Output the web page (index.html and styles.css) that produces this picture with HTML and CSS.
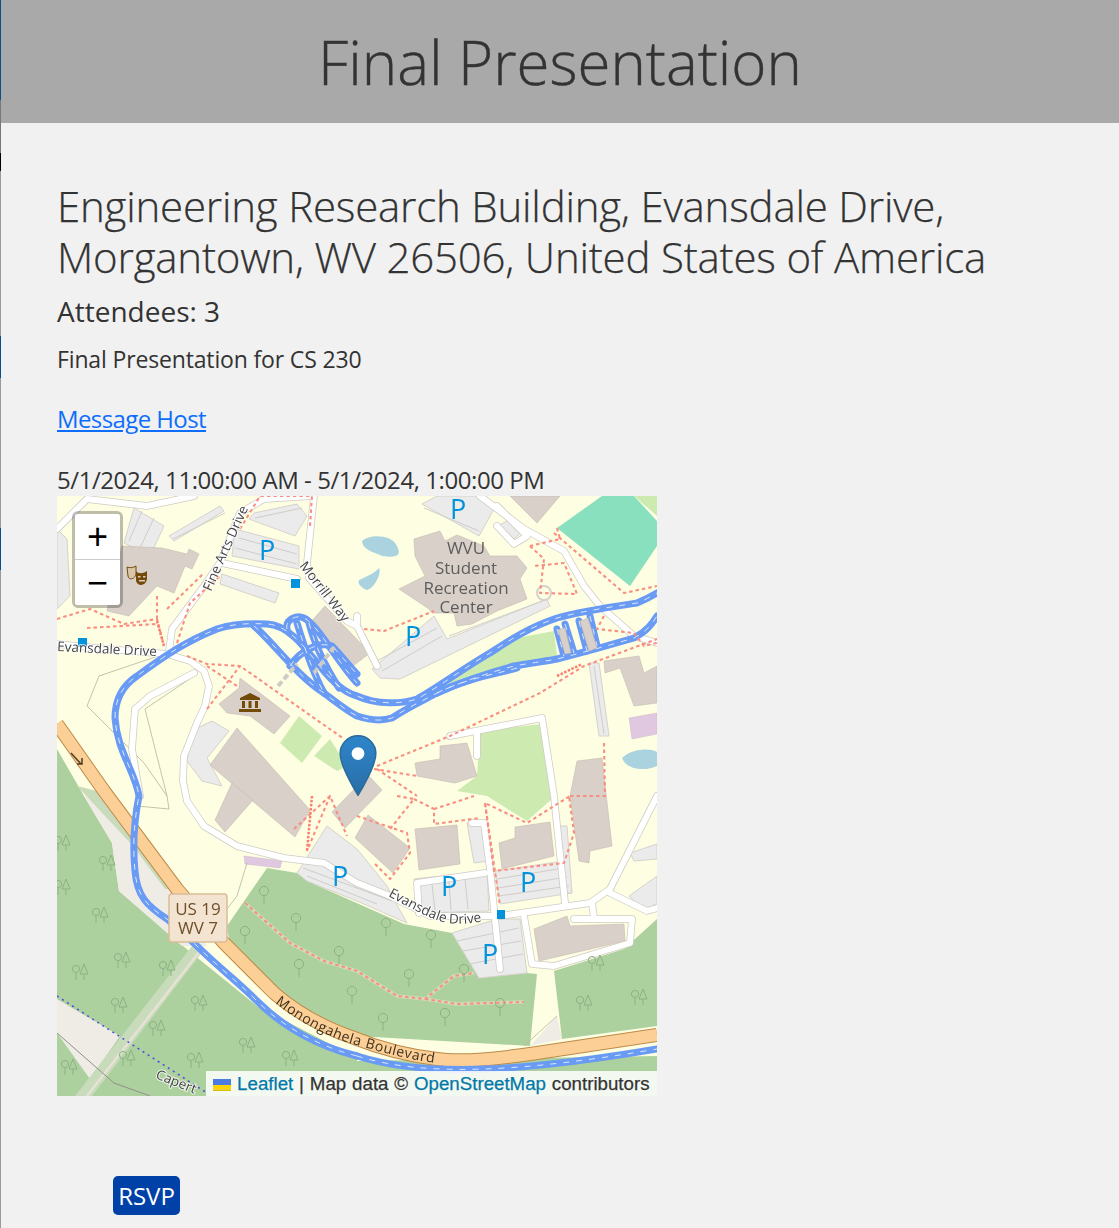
FILE: index.html
```html
<!DOCTYPE html>
<html lang="en">
<head>
  <meta charset="UTF-8">
  <title>Final Presentation</title>
  <meta name="viewport" content="width=device-width, initial-scale=1.0">
  <link rel="stylesheet" href="styles.css">
</head>
<body>

  <header class="top-bar">
    <h1>Final Presentation</h1>
  </header>

  <main class="event">
    <h2>Engineering Research Building, Evansdale Drive, Morgantown, WV 26506, United States of America</h2>
    <h3>Attendees: 3</h3>
    <p class="description">Final Presentation for CS 230</p>
    <p class="host"><a href="#">Message Host</a></p>
    <p class="dates">5/1/2024, 11:00:00 AM - 5/1/2024, 1:00:00 PM</p>

    <div class="map">
      <svg class="tiles" viewBox="0 0 600 600" width="600" height="600">
        <defs>
          <g id="tree"><circle cx="0" cy="-5" r="4.6"/><path d="M0 0v8"/></g>
          <g id="trees"><circle cx="-4" cy="-4" r="3.6"/><path d="M-4 0v7"/><path d="M4 -9l-4 10h8zM4 1v6"/></g>

          <g id="roads">
            <polyline points="0,148 50,153 110,158 133,165 147,175 152,190 148,210 140,227 127,260 126,285 130,305 147,330 180,350 227,362 267,367 300,387 333,400 373,420 443,420 533,407 553,393 600,300"/>
            <polyline points="112,155 115,133 147,90 163,67 183,17 207,3 255,0"/>
            <polyline points="257,0 250,67 252,82 290,125 300,130 320,170"/>
            <polyline points="165,67 240,83"/>
            <polyline points="0,33 30,3 90,10 137,0"/>
            <polyline points="423,0 467,33 507,55 527,90 543,110 577,140 600,147"/>
            <polyline points="393,240 485,222 497,300 508,407"/>
            <polyline points="420,237 420,260"/>
            <polyline points="415,327 427,327 433,373 443,473"/>
            <polyline points="362,417 360,387 428,377"/>
            <polyline points="467,420 475,468 497,470 573,447 575,423 517,423"/>
            <polyline points="535,407 537,422"/>
            <polyline points="553,397 590,415 600,412"/>
            <polyline points="137,177 93,200 78,213 75,253 83,300"/>
            <polyline points="300,127 300,120"/>
            <polyline points="440,30 457,48 470,40 440,10"/>
          </g>

          <g id="paths">
            <polyline points="0,123 33,113 67,128 100,123 107,150"/>
            <polyline points="30,132 100,128"/>
            <polyline points="100,123 100,97"/>
            <polyline points="110,113 147,77"/>
            <polyline points="120,147 133,107 163,80"/>
            <polyline points="130,160 150,168 183,170 240,210 287,243"/>
            <polyline points="150,213 183,170"/>
            <polyline points="150,170 180,190"/>
            <polyline points="183,33 203,0 255,0 253,30"/>
            <polyline points="307,133 327,135 377,115"/>
            <polyline points="320,270 393,240 483,197 527,170 600,143"/>
            <polyline points="317,273 360,280"/>
            <polyline points="320,273 360,300"/>
            <polyline points="473,50 487,63 483,97 520,98 507,67 477,70"/>
            <polyline points="500,32 503,43 473,50"/>
            <polyline points="497,37 567,97 600,90"/>
            <polyline points="547,120 540,133 577,137 587,150 600,147"/>
            <polyline points="547,247 548,300 512,300 517,337 507,367 437,375 428,307 470,327 513,300"/>
            <polyline points="340,300 357,303 333,333"/>
            <polyline points="357,303 377,313 377,328 423,322"/>
            <polyline points="377,313 417,300"/>
            <polyline points="300,320 350,337 353,357 333,383 317,367"/>
            <polyline points="428,307 443,410"/>
            <polyline points="273,300 250,355"/>
            <polyline points="237,333 273,300 290,340"/>
          </g>

          <g id="motorway">
            <path d="M300 560C260 550 225 530 200 505C180 485 160 470 140 450L110 423C90 410 80 400 78 375C76 355 76 330 82 300C78 275 60 255 58 222C58 200 68 188 80 180C110 158 130 145 160 133C175 128 190 127 210 128C230 129 245 148 257 163C272 182 285 196 300 200C320 209 345 208 360 203C380 192 410 170 433 157C450 146 470 132 500 122C525 115 560 110 580 107C590 103 595 100 600 97"/>
            <path d="M197 130C215 145 240 180 267 197C280 207 290 215 300 220C315 225 325 225 335 222C350 212 365 205 380 197C395 190 420 180 457 170C480 166 490 165 500 163C520 158 550 150 577 142C590 135 595 128 600 120"/>
            <path d="M230 133C228 125 238 118 247 122C260 128 280 165 300 187"/>
            <path d="M233 170C243 155 262 145 275 150C285 160 292 170 300 178"/>
            <path d="M240 127C247 150 255 175 267 197"/>
            <path d="M252 127C258 150 268 170 282 192"/>
            <path d="M500 133L507 160M508 128L517 157M522 125L530 155M533 120L540 150"/>
            <path d="M380 197C410 182 440 178 460 172"/>
            <path d="M300 560C370 582 470 575 600 553"/>
          </g>

          <path id="evansdale-curve" d="M331 400C350 410 370 422 390 427C405 429 420 427 435 423"/>
          <path id="monongahela-curve" d="M218 507C245 528 275 543 300 549C330 558 355 564 385 568"/>
        </defs>

        <rect class="land" width="600" height="600"/>

        <!-- forest and bare ground -->
        <polygon class="forest" points="0,253 27,300 55,347 62,395 132,455 200,510 300,562 300,600 0,600"/>
        <polygon class="ground" points="27,300 47,300 120,393 150,450 125,450 62,395 55,347"/>
        <polygon class="verge" points="20,290 40,295 120,393 108,393 76,350"/>
        <polygon class="forest" points="172,443 170,430 210,372 240,377 250,385 347,428 395,437 422,482 470,477 480,478 473,550 300,540 222,505"/>
        <polygon class="forest" points="497,475 567,453 600,423 600,530 505,543"/>
        <polygon class="forest" points="300,565 600,560 600,600 200,600"/>
        <polygon class="ground" points="473,550 500,520 505,543"/>
        <polygon class="ground" points="0,503 63,540 33,583 0,537"/>
        <polygon class="verge" points="135,450 146,455 35,600 18,600"/>
        <path class="track" d="M143 455L30 600"/>

        <!-- grass and pitch -->
        <polygon class="pitch" points="500,32 545,0 577,0 600,25 600,50 573,90"/>
        <polygon class="grass" points="577,0 600,0 600,20"/>
        <polygon class="grass" points="497,135 500,160 460,168 417,180 380,197 417,163 460,142"/>
        <polygon class="grass" points="423,235 485,228 495,303 470,325 430,300 400,295 420,280"/>
        <polygon class="grass" points="223,247 242,220 265,240 245,267"/>
        <polygon class="grass" points="257,260 273,243 290,270 280,275"/>

        <path class="water" d="M305 45C312 38 335 38 340 50C345 60 340 62 325 60C318 56 306 55 305 45zM302 84C312 80 320 75 322 72C325 76 318 92 310 94C305 92 300 88 302 84z"/>
        <path class="water" d="M565 262C575 252 595 252 600 256V270C590 275 570 275 565 262z"/>

        <!-- parking lots -->
        <g class="lot">
          <polygon points="77,12 107,30 93,60 67,47"/>
          <polygon points="0,33 10,43 13,100 0,113"/>
          <polygon points="178,33 242,50 242,73 175,60"/>
          <polygon points="197,17 240,8 250,20 238,40 192,23"/>
          <polygon points="165,78 222,97 218,107 163,88"/>
          <polygon points="112,40 163,10 167,15 117,45"/>
          <polygon points="315,173 377,120 390,143 490,103 493,110 343,183 323,182"/>
          <polygon points="365,8 380,0 420,0 437,13 422,40"/>
          <polygon points="440,30 457,22 468,33 457,43"/>
          <polygon points="532,167 542,167 552,240 542,240"/>
          <polygon points="240,377 270,330 300,353 330,390 335,400 350,427 300,405 250,385"/>
          <polygon points="357,383 430,375 432,415 363,417"/>
          <polygon points="438,375 507,365 515,397 443,408"/>
          <polygon points="395,437 440,423 463,423 470,477 422,482"/>
          <polygon points="573,357 600,348 600,363 577,365"/>
          <polygon points="572,400 600,380 600,407 588,415"/>
          <polygon points="410,327 427,325 432,365 417,367"/>
          <polygon points="503,330 510,330 515,397 508,397"/>
          <polygon points="134,235 155,225 172,235 150,262 165,290 145,285 130,265"/>
        </g>
        <g class="lot-lines">
          <path d="M182 42L240 58M178 52L240 68M198 22L245 12M85 15L72 45M97 22L83 52M168 17L116 43"/>
          <path d="M320 165L380 132M325 175L385 140M392 140L488 104M367 12L422 35"/>
          <path d="M246 372L335 405M250 380L320 408"/>
          <path d="M375 388L378 415M392 385L394 414M408 383L411 413"/>
          <path d="M440 383L507 372M441 392L510 381M442 400L512 390"/>
          <path d="M400 445L462 432M406 455L464 445M412 468L466 458M537 170L547 238"/>
        </g>

        <!-- buildings -->
        <g class="building">
          <polygon points="65,50 105,52 130,58 132,53 142,58 135,73 128,70 117,97 100,90 72,120 50,115"/>
          <polygon points="268,110 313,157 292,173 253,127"/>
          <polygon points="183,182 233,220 217,238 193,220 170,217 162,208 182,192"/>
          <polygon points="180,232 253,314 238,341 153,269"/>
          <polygon points="175,287 196,304 168,336 158,324"/>
          <polygon points="311,279 325,294 288,332 275,316"/>
          <polygon points="311,319 353,352 336,377 298,342"/>
          <polygon points="358,333 400,329 403,368 362,374"/>
          <polygon points="442,347 458,342 458,331 493,326 497,360 445,373"/>
          <polygon points="520,265 545,262 555,350 533,355 532,367 522,365 513,300"/>
          <polygon points="358,267 383,263 383,250 410,247 420,280 398,287 360,280"/>
          <polygon points="357,43 383,35 388,45 400,39 427,50 433,60 460,60 470,72 463,83 470,103 440,115 415,128 400,130 397,117 375,117 372,113 342,93 368,80 358,60"/>
          <polygon points="453,0 503,0 480,27"/>
          <polygon points="547,165 582,160 587,177 600,170 600,207 577,210 563,172 548,177"/>
          <polygon points="477,433 510,420 513,430 567,428 568,445 482,465"/>
        </g>
        <polygon class="pink" points="572,222 600,217 600,238 575,243"/>
        <polygon class="pink" points="187,360 225,365 223,372 188,368"/>

        <!-- tracks and boundaries -->
        <g class="fence">
          <polyline points="110,157 42,180 30,210 87,267 110,300 112,313 80,310"/>
          <polyline points="137,180 88,213 110,300"/>
          <polyline points="190,367 180,400 170,413"/>
          <polyline points="500,520 467,550"/>
        </g>
        <path class="rail" d="M0 537L57 587L93 600"/>
        <path class="rail-dots" d="M0 500L150 597"/>

        <!-- roads -->
        <use href="#roads" class="road-case"/>
        <use href="#roads" class="road"/>
        <circle class="roundabout" cx="487" cy="97" r="7"/>

        <!-- main road and motorway -->
        <path class="trunk-case" d="M0 228L47 295L120 393L167 447L217 497C240 517 270 533 300 543C330 555 355 560 380 563C400 566 440 563 480 557L600 539"/>
        <path class="trunk" d="M0 228L47 295L120 393L167 447L217 497C240 517 270 533 300 543C330 555 355 560 380 563C400 566 440 563 480 557L600 539"/>
        <use href="#motorway" class="motorway"/>
        <use href="#motorway" class="motorway-dash"/>
        <polygon class="building" points="523,125 531,122 540,152 532,155"/>
        <polygon class="building" points="501,134 508,132 514,157 508,158"/>
        <path class="bridge" d="M221 190L240 168M257 177L278 150"/>

        <!-- footpaths -->
        <use href="#paths" class="path"/>
        <path class="trail-edge" d="M188 407L233 447L267 465L300 475L340 500L368 503L397 480L417 477M368 503L400 508L467 506"/>
        <path class="path" d="M188 407L233 447L267 465L300 475L340 500L368 503L397 480L417 477M368 503L400 508L467 506"/>
        <path class="path-thick" d="M500 180L525 168M100 125L107 150M255 300L250 355"/>

        <!-- trees -->
        <g class="tree-marks">
          <use href="#trees" x="5" y="348"/><use href="#trees" x="50" y="368"/><use href="#trees" x="5" y="392"/>
          <use href="#trees" x="43" y="420"/><use href="#trees" x="65" y="465"/><use href="#trees" x="23" y="477"/>
          <use href="#trees" x="110" y="473"/><use href="#trees" x="62" y="510"/><use href="#trees" x="142" y="508"/>
          <use href="#trees" x="100" y="533"/><use href="#trees" x="190" y="550"/><use href="#trees" x="138" y="565"/>
          <use href="#trees" x="233" y="563"/><use href="#trees" x="12" y="572"/><use href="#trees" x="70" y="563"/>
          <use href="#trees" x="539" y="468"/><use href="#trees" x="527" y="508"/><use href="#trees" x="582" y="502"/>
          <use href="#tree" x="207" y="400"/><use href="#tree" x="239" y="427"/><use href="#tree" x="188" y="440"/>
          <use href="#tree" x="282" y="460"/><use href="#tree" x="242" y="473"/><use href="#tree" x="295" y="500"/>
          <use href="#tree" x="329" y="432"/><use href="#tree" x="374" y="444"/><use href="#tree" x="352" y="483"/>
          <use href="#tree" x="407" y="478"/><use href="#tree" x="443" y="512"/><use href="#tree" x="388" y="522"/>
          <use href="#tree" x="326" y="527"/>
        </g>

        <!-- stops and icons -->
        <g class="stop">
          <rect x="21" y="142" width="9" height="9"/>
          <rect x="234" y="83" width="9" height="9"/>
          <rect x="440" y="414" width="8" height="9"/>
        </g>
        <path class="poi" d="M183 202L193 197L203 202V204H183zM185 205H188V212H185zM191.500 205H194.500V212H191.500zM198 205H201V212H198zM182 213H204V216H182z"/>
        <path class="poi-outline" d="M70 71C73 72 76 72 79 70L79 78C78 83 72 85 71 80z"/>
        <path class="poi" d="M79 75C81 78 86 78 90 75L90 83C89 90 81 91 79 85z"/>
        <path class="poi-face" d="M81 80h2.500v1.500H81zM86 80h2.500v1.500H86zM82 84h6v1.500h-6z"/>
        <path class="arrow" d="M14 257L24 268M20 268H25V262"/>

        <!-- labels -->
        <g class="parking">
          <text x="210" y="64">P</text><text x="401" y="23">P</text><text x="356" y="150">P</text>
          <text x="283" y="390">P</text><text x="392" y="400">P</text><text x="471" y="396">P</text><text x="433" y="468">P</text>
        </g>
        <text class="road-label" transform="translate(0 155) rotate(3)">Evansdale Drive</text>
        <text class="road-label" transform="translate(154 96) rotate(-66)">Fine Arts Drive</text>
        <text class="road-label" transform="translate(242 70) rotate(52)">Morrill Way</text>
        <text class="road-label"><textPath href="#evansdale-curve">Evansdale Drive</textPath></text>
        <text class="road-label" transform="translate(98 582) rotate(22)">Capert</text>
        <text class="road-label road-label-wide"><textPath href="#monongahela-curve">Monongahela Boulevard</textPath></text>
        <g class="place">
          <text x="409" y="58">WVU</text><text x="409" y="78">Student</text>
          <text x="409" y="98">Recreation</text><text x="409" y="117">Center</text>
        </g>
        <g class="shield">
          <rect x="112" y="398" width="58" height="48" rx="3"/>
          <text x="141" y="419">US 19</text><text x="141" y="438">WV 7</text>
        </g>
      </svg>

      <svg class="marker" viewBox="0 0 25 41" width="38" height="61">
        <defs>
          <linearGradient id="pin" x1="0" y1="0" x2="0" y2="1">
            <stop offset="0" stop-color="#2e85cb"/>
            <stop offset="1" stop-color="#2a6ea6"/>
          </linearGradient>
        </defs>
        <path d="M12.500 0.500C5.900 0.500 0.500 5.900 0.500 12.500C0.500 21.500 12.500 40.500 12.500 40.500S24.500 21.500 24.500 12.500C24.500 5.900 19.100 0.500 12.500 0.500z" fill="url(#pin)" stroke="#2a6a9c"/>
        <circle cx="12.500" cy="12.500" r="4.300" fill="#fff"/>
      </svg>

      <div class="zoom-box">
        <a href="#" class="zoom-btn">+</a>
        <a href="#" class="zoom-btn">&#8722;</a>
      </div>

      <div class="attribution">
        <svg viewBox="0 0 12 8" width="18" height="12"><path fill="#4c7be1" d="M0 0h12v4H0z"/><path fill="#ffd500" d="M0 4h12v3H0z"/><path fill="#e0bc00" d="M0 7h12v1H0z"/></svg>
        <a href="#">Leaflet</a> | Map data &copy; <a href="#">OpenStreetMap</a> contributors
      </div>
    </div>

    <button class="rsvp">RSVP</button>
  </main>

</body>
</html>
```

FILE: styles.css
```css
body {
  margin: 0;
  height: 1228px;
  overflow: hidden;
  background-color: #f1f1f1;
  background-image: linear-gradient(#0b4f8a 0 100px, #777 100px 153px, #000 153px 171px, #999 171px 336px, #0b4f8a 336px 378px, #999 378px 528px, #0b4f8a 528px 570px, #999 570px);
  background-size: 1px 100%;
  background-repeat: no-repeat;
  font-family: "Open Sans", "Noto Sans", sans-serif;
  color: #333;
}

.top-bar {
  margin-left: 1px;
  height: 123px;
  background-color: #a9a9a9;
  display: flex;
  align-items: center;
  justify-content: center;
}

.top-bar h1 {
  margin: 0;
  font-size: 60px;
  font-weight: 300;
  -webkit-text-stroke: 0.4px;
}

.event {
  padding: 57px 0 0 57px;
}

.event h2 {
  margin: 0;
  width: 960px;
  font-size: 42px;
  font-weight: 300;
  line-height: 51px;
  letter-spacing: -0.2px;
  -webkit-text-stroke: 0.25px;
}

.event h3 {
  margin: 4px 0 0;
  font-size: 28px;
  font-weight: 400;
  line-height: 50px;
}

.description {
  margin: 3px 0 0;
  font-size: 23px;
  line-height: 40px;
  letter-spacing: -0.15px;
}

.host {
  margin: 20px 0 0;
  font-size: 24px;
  line-height: 40px;
  letter-spacing: -0.6px;
}

.host a {
  color: #0d6efd;
}

.dates {
  margin: 25px 0 0;
  font-size: 24px;
  line-height: 32px;
  letter-spacing: -0.43px;
}

.map {
  position: relative;
  width: 600px;
  height: 600px;
  overflow: hidden;
}

.tiles {
  display: block;
  filter: blur(0.6px);
}

.land { fill: #fefee2; }
.forest { fill: #add19e; }
.ground { fill: #efece6; }
.verge { fill: #c8dcbc; }
.track { fill: none; stroke: #e8e2d6; stroke-width: 2.5; }
.pitch { fill: #88e0be; }
.grass { fill: #cdebb0; }
.water { fill: #aad3df; }
.pink { fill: #e0c8e0; stroke: #cdb8cd; stroke-width: 0.5; }

.lot polygon { fill: #ebebeb; stroke: #d6d2cc; stroke-width: 1; }
.lot-lines { fill: none; stroke: #cfcdc9; stroke-width: 1; }
.building polygon, polygon.building { fill: #d9d0c9; stroke: #c6bab0; stroke-width: 0.6; }

.fence { fill: none; stroke: #b5b59c; stroke-width: 0.8; }
.rail { fill: none; stroke: #8f8f8f; stroke-width: 1; }
.rail-dots { fill: none; stroke: #4f4fe0; stroke-width: 1.6; stroke-dasharray: 2 4; }

.road-case { fill: none; stroke: #cfcbc5; stroke-width: 7.5; stroke-linejoin: round; stroke-linecap: round; }
.road { fill: none; stroke: #fff; stroke-width: 6; stroke-linejoin: round; stroke-linecap: round; }
.roundabout { fill: #fefee2; stroke: #d6d2cc; stroke-width: 2; }

.trunk-case { fill: none; stroke: #bd8a4a; stroke-width: 14; }
.trunk { fill: none; stroke: #fbcf95; stroke-width: 12; }
.motorway { fill: none; stroke: #6a9bf4; stroke-width: 7; stroke-linecap: round; }
.motorway-dash { fill: none; stroke: #dbe6fb; stroke-width: 1; stroke-dasharray: 6 7; }
.bridge { fill: none; stroke: #cfcbc5; stroke-width: 4; stroke-dasharray: 6 3; }

.path { fill: none; stroke: #f98f82; stroke-width: 2.1; stroke-dasharray: 3.500 3; stroke-linejoin: round; }
.path-thick { fill: none; stroke: #fa8072; stroke-width: 2.5; stroke-dasharray: 2.500 1.500; }
.trail-edge { fill: none; stroke: #cfdcb8; stroke-width: 3.500; }

.tree-marks { fill: none; stroke: #8db184; stroke-width: 1; }
.stop rect { fill: #0092da; }
.poi { fill: #734a08; }
.poi-outline { fill: #d9c6a8; stroke: #734a08; stroke-width: 1; }
.poi-face { fill: #d9d0c9; }
.arrow { fill: none; stroke: #4d3f22; stroke-width: 1.500; }

.parking text { fill: #0092da; font-size: 27px; font-weight: 500; text-anchor: middle; }
.road-label {
  fill: #444;
  font-size: 13.500px;
  stroke: #fff;
  stroke-width: 2px;
  stroke-opacity: 0.75;
  paint-order: stroke;
}
.road-label-wide {
  fill: #3d3020;
  font-size: 14px;
  letter-spacing: 0.6px;
  stroke: none;
}
.place text { fill: #5d5d5d; font-size: 17px; text-anchor: middle; }
.shield rect { fill: #f3e4d2; stroke: #d9bd98; stroke-width: 1.500; }
.shield text { fill: #6e4f2a; font-size: 17px; text-anchor: middle; }

.marker {
  position: absolute;
  left: 282px;
  top: 239px;
}

.zoom-box {
  position: absolute;
  top: 15px;
  left: 15px;
  border: 3px solid rgba(0, 0, 0, 0.25);
  border-radius: 6px;
  background-clip: padding-box;
  display: flex;
  flex-direction: column;
}

.zoom-btn {
  width: 45px;
  height: 45px;
  background-color: #fff;
  color: #000;
  font: 36px/51px "Liberation Mono", monospace;
  text-align: center;
  text-decoration: none;
}

.zoom-btn:first-child {
  border-bottom: 1px solid #ccc;
  border-radius: 3px 3px 0 0;
}

.zoom-btn:last-child {
  border-radius: 0 0 3px 3px;
}

.attribution {
  position: absolute;
  right: 0;
  bottom: 0;
  height: 25px;
  padding: 0 7.500px;
  background-color: rgba(255, 255, 255, 0.85);
  font: 18.700px/25px "Liberation Sans", Arial, sans-serif;
  word-spacing: 0.7px;
  -webkit-text-stroke: 0.25px;
  color: #333;
  white-space: nowrap;
}

.attribution svg {
  vertical-align: -1px;
}

.attribution a {
  color: #0078a8;
  text-decoration: none;
}

.rsvp {
  display: block;
  margin: 80px 0 0 56px;
  width: 67px;
  height: 39px;
  padding: 0;
  border: none;
  border-radius: 5px;
  background-color: #0041a8;
  color: #fff;
  font-family: inherit;
  font-size: 24px;
}
```
